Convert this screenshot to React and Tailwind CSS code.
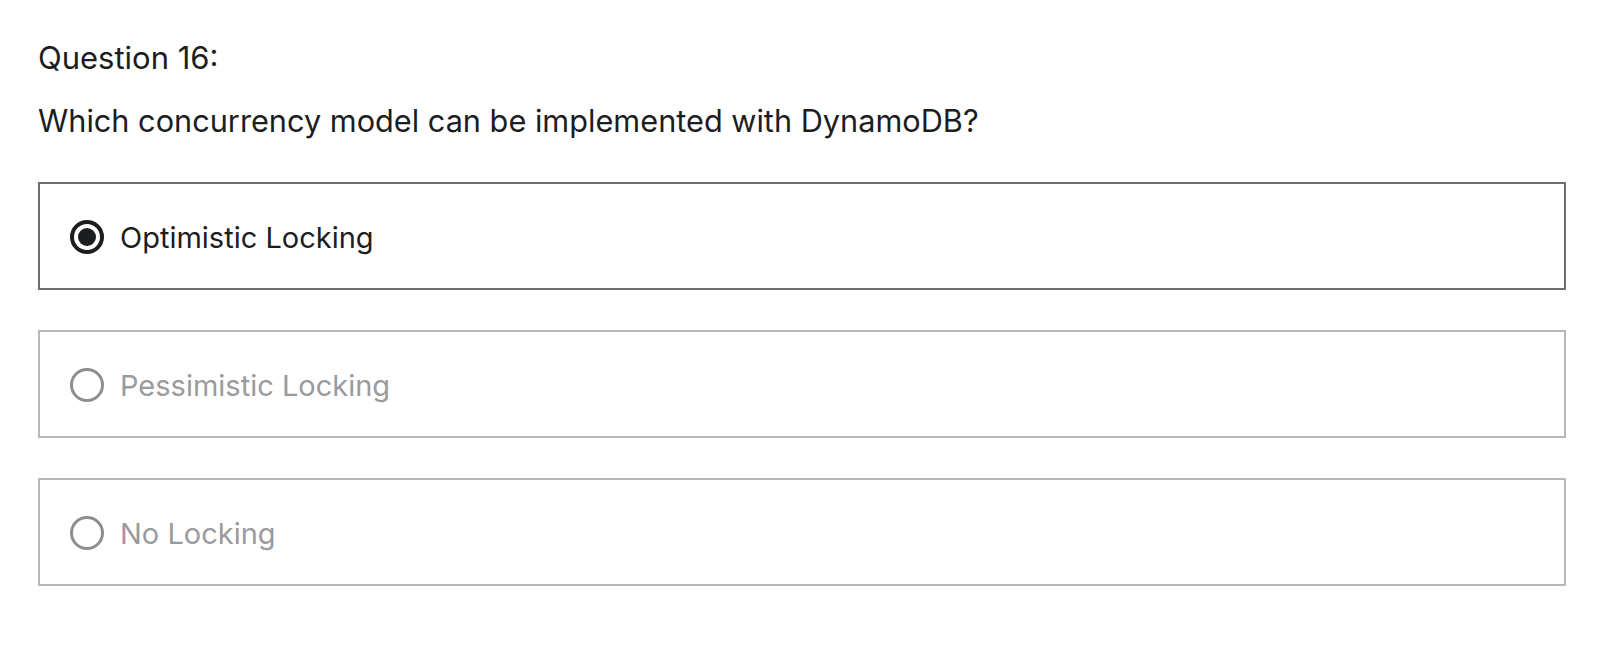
export default function App() {
  const options = [
    { label: "Optimistic Locking", selected: true },
    { label: "Pessimistic Locking", selected: false },
    { label: "No Locking", selected: false },
  ];
  return (
    <div className="min-h-[668px] w-full bg-white px-[38px] pt-[37px] text-[#1c1d1f]" style={{ fontFamily: "Inter, 'Noto Sans', sans-serif" }}>
      <div className="text-[31px] leading-[42px]">Question 16:</div>
      <div className="mt-[21px] text-[30.7px] leading-[42px]">Which concurrency model can be implemented with DynamoDB?</div>
      <div className="mt-[40px] flex flex-col gap-[40px]">
        {options.map((o) => (
          <div
            key={o.label}
            className={
              "flex h-[108px] items-center gap-[16px] border-2 px-[30px] " +
              (o.selected ? "border-[#6a6f73]" : "border-[#b6b8ba]")
            }
          >
            {o.selected ? (
              <span className="mt-[2px] flex h-[34px] w-[34px] shrink-0 items-center justify-center rounded-full border-[4px] border-[#1c1d1f]">
                <span className="h-[18px] w-[18px] rounded-full bg-[#1c1d1f]" />
              </span>
            ) : (
              <span className="mt-[2px] h-[34px] w-[34px] shrink-0 rounded-full border-[3px] border-[#8e8e8f]" />
            )}
            <span className={"pt-[3px] text-[29px] leading-[42px] " + (o.selected ? "text-[#1c1d1f]" : "text-[#9a9b9c]")}>{o.label}</span>
          </div>
        ))}
      </div>
    </div>
  );
}
